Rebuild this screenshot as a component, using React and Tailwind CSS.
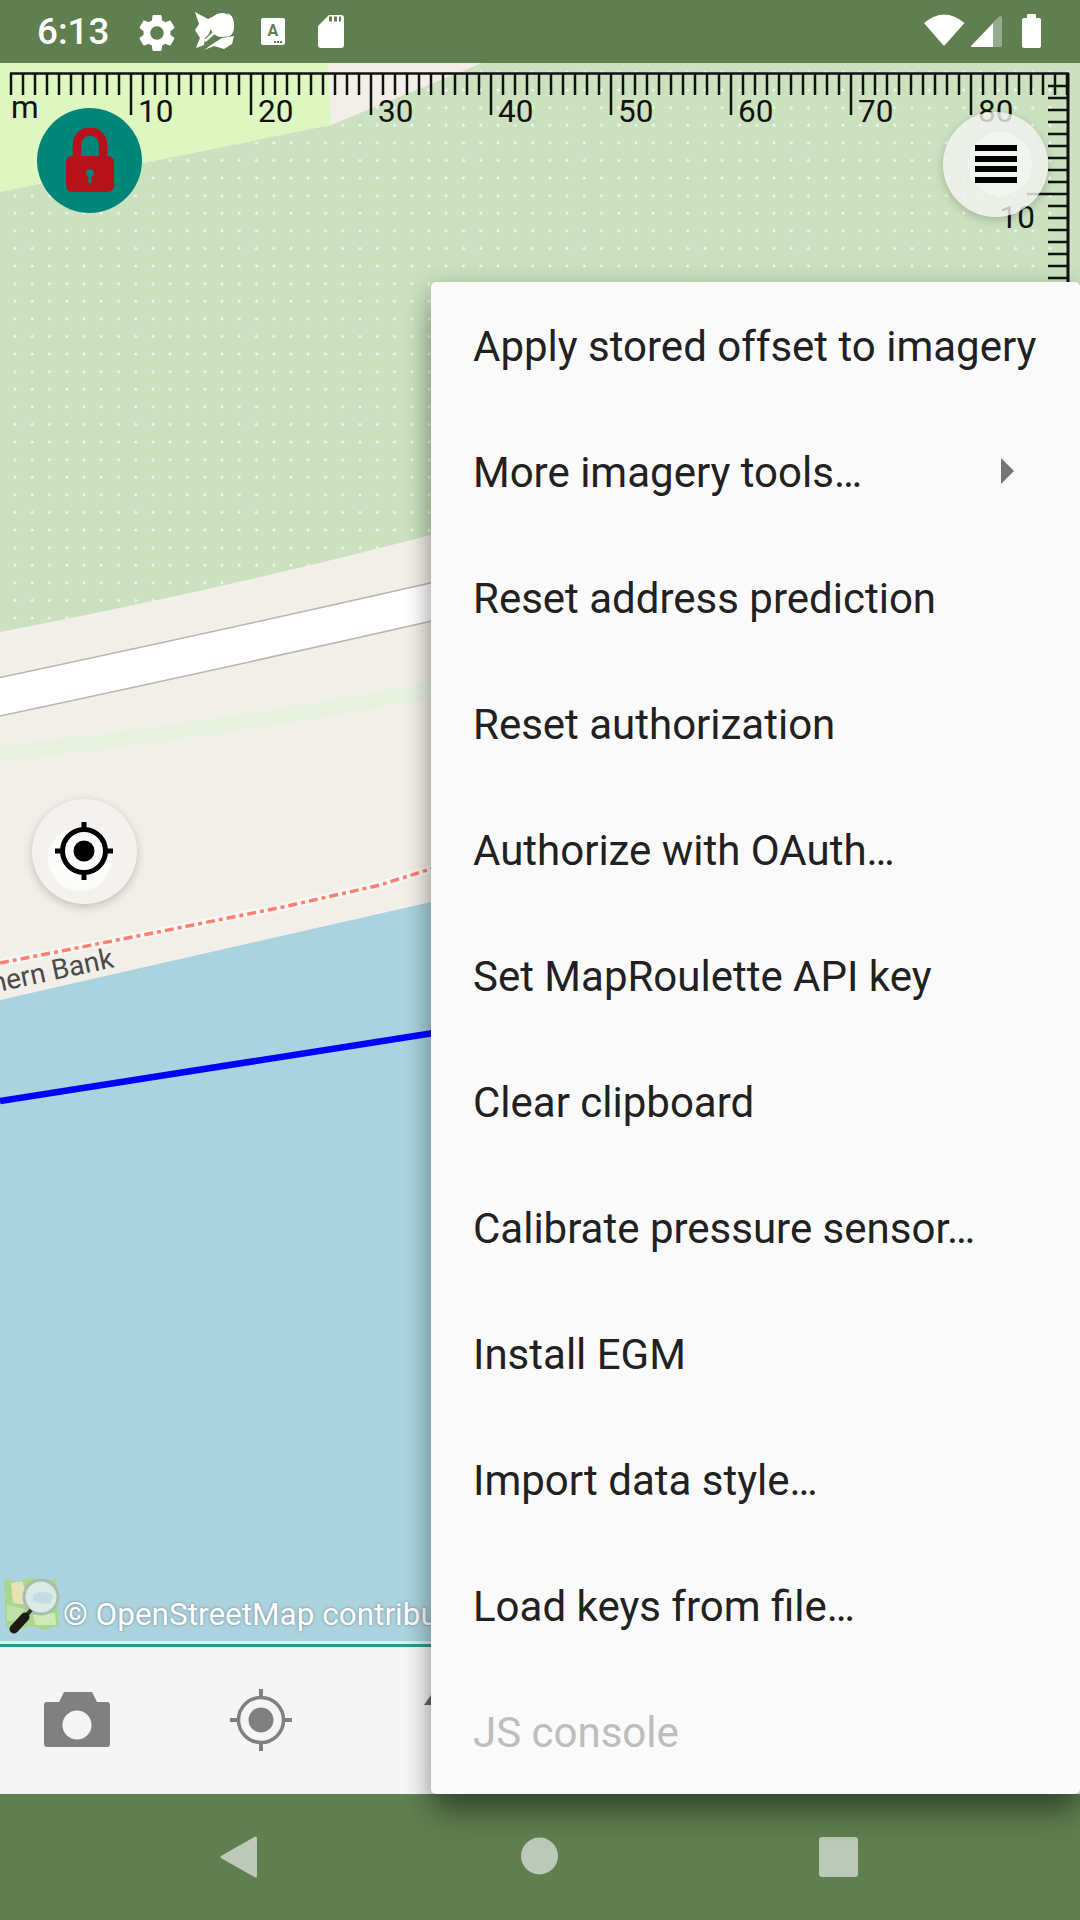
const MENU_ITEMS = [
  { label: "Apply stored offset to imagery" },
  { label: "More imagery tools…", submenu: true },
  { label: "Reset address prediction" },
  { label: "Reset authorization" },
  { label: "Authorize with OAuth…" },
  { label: "Set MapRoulette API key" },
  { label: "Clear clipboard" },
  { label: "Calibrate pressure sensor…" },
  { label: "Install EGM" },
  { label: "Import data style…" },
  { label: "Load keys from file…" },
  { label: "JS console", disabled: true },
];

const RULER_LABELS = [10, 20, 30, 40, 50, 60, 70, 80];
const H_TICKS = Array.from({ length: 89 }, (_, i) => i);
const V_TICKS = Array.from({ length: 18 }, (_, i) => i + 1);

const GEAR =
  "M19.14 12.94c.04-.3.06-.61.06-.94 0-.32-.02-.64-.07-.94l2.03-1.58c.18-.14.23-.41.12-.61l-1.92-3.32c-.12-.22-.37-.29-.59-.22l-2.39.96c-.5-.38-1.03-.7-1.62-.94l-.36-2.54c-.04-.24-.24-.41-.48-.41h-3.84c-.24 0-.43.17-.47.41l-.36 2.54c-.59.24-1.13.57-1.62.94l-2.39-.96c-.22-.08-.47 0-.59.22L2.74 8.87c-.12.21-.08.47.12.61l2.03 1.58c-.05.3-.09.63-.09.94s.02.64.07.94l-2.03 1.58c-.18.14-.23.41-.12.61l1.92 3.32c.12.22.37.29.59.22l2.39-.96c.5.38 1.03.7 1.62.94l.36 2.54c.05.24.24.41.48.41h3.84c.24 0 .44-.17.47-.41l.36-2.54c.59-.24 1.13-.56 1.62-.94l2.39.96c.22.08.47 0 .59-.22l1.92-3.32c.12-.22.07-.47-.12-.61l-2.01-1.58zM12 15.6c-1.98 0-3.6-1.62-3.6-3.6s1.62-3.6 3.6-3.6 3.6 1.62 3.6 3.6-1.62 3.6-3.6 3.6z";

const StatusBar = () => (
  <div className="h-[63px] shrink-0 bg-[#5f7f50] flex items-center relative">
    <span className="ml-[37px] w-[72px] text-[36.75px] leading-[63px] text-white font-medium font-[Roboto,sans-serif]">6:13</span>
    <svg className="absolute left-0 top-0" width="1080" height="63" viewBox="0 0 1080 63">
      <g transform="translate(134.5 10.5) scale(1.875)">
        <path fill="#fff" d={GEAR} />
      </g>
      {/* osmeditor notification icon */}
      <path fill="#fff" d="M195 12 L208 19 L218 14 L213 22 L209 34 L205 38 L204 45 L196 48 L200 38 L195 30 L199 24 Z" />
      <circle cx="222" cy="25" r="12" fill="#fff" />
      <path fill="#fff" d="M228 13 Q235 17 234 29 Q233 36 226 37 L231 29 Z" />
      <path fill="none" stroke="#fff" strokeWidth="2.5" d="M205 41 L214 33" />
      <path fill="#fff" d="M204 50 L214 43 L222 38 L234 36 L232 44 L224 49 L214 46 Z" />
      <rect x="261" y="18" width="24" height="27" rx="2" fill="#fff" />
      <text x="267.5" y="36" fill="#5f7f50" fontFamily="Roboto, sans-serif" fontWeight="700" fontSize="16">A</text>
      <path stroke="#5f7f50" strokeWidth="2" strokeDasharray="2 1" d="M274 42 H283" />
      <path fill="#fff" d="M329 15 H341 Q344 15 344 18 V45 Q344 48 341 48 H321 Q318 48 318 45 V26 Z" />
      <path stroke="#5f7f50" strokeWidth="5" strokeDasharray="3 2" d="M329 19 H341" fill="none" />
      <path fill="#fff" d="M924 23 Q944 6 964.5 23 L945 45 Q944 46 943 45 Z" />
      <path fill="#fff" fillOpacity="0.35" d="M1000 16 Q1002 16 1002 18 V45 Q1002 47 1000 47 H993 V22 Z" />
      <path fill="#fff" d="M993 23 V47 H972 Q970 47 972 45 Z" />
      <path fill="#fff" d="M1027 18 V15 Q1027 14 1028 14 H1035 Q1036 14 1036 15 V18 H1039 Q1041 18 1041 20 V46 Q1041 48 1039 48 H1024 Q1022 48 1022 46 V20 Q1022 18 1024 18 Z" />
    </svg>
  </div>
);

const MapCanvas = () => (
  <svg className="absolute inset-0" width="1080" height="1584" viewBox="0 63 1080 1584">
    <defs>
      <pattern id="dots" x="15" y="2" width="17.25" height="17.6" patternUnits="userSpaceOnUse">
        <circle cx="0" cy="0" r="1.5" fill="#fff" fillOpacity="0.75" />
        <circle cx="17.25" cy="0" r="1.5" fill="#fff" fillOpacity="0.75" />
        <circle cx="0" cy="17.6" r="1.5" fill="#fff" fillOpacity="0.75" />
        <circle cx="17.25" cy="17.6" r="1.5" fill="#fff" fillOpacity="0.75" />
      </pattern>
    </defs>
    <rect x="0" y="63" width="1080" height="1584" fill="#f2efe9" />
    <path fill="#def6c0" d="M0 63 H328 L331 125 L0 192 Z" />
    <path fill="#cbe1bf" d="M0 192 L331 125 L482 63 H1080 V480 L431 535 Q220 590 0 632 Z" />
    <path fill="url(#dots)" d="M0 192 L331 125 L482 63 H1080 V480 L431 535 Q220 590 0 632 Z" />
    {/* road */}
    <path fill="none" stroke="#b8b5b0" strokeWidth="39" d="M-20 701 Q220 650 440 600" />
    <path fill="none" stroke="#fff" strokeWidth="36" d="M-20 701 Q220 650 440 600" />
    <path fill="none" stroke="#e7f2e1" strokeWidth="16" d="M-20 756 Q220 730 440 689" />
    <path fill="#aad3df" d="M0 1000 Q220 950 431 902 L1080 800 V1642 H0 Z" />
    <path fill="none" stroke="#f8f6f2" strokeWidth="8" d="M0 963 L143 935 L283 907 L380 885 L440 866" />
    <path fill="none" stroke="#fa8072" strokeWidth="3.5" strokeDasharray="9 4 4 4" d="M0 963 L143 935 L283 907 L380 885 L440 866" />
    <path fill="none" stroke="#0000ff" strokeWidth="6.5" d="M0 1101 L440 1032" />
    <g transform="translate(-7 993) rotate(-12)">
      <text x="0" y="0" fill="#4a4a4a" stroke="#f2efe9" strokeWidth="3" paintOrder="stroke" fontFamily="Roboto, sans-serif" fontSize="28">hern Bank</text>
    </g>
    <rect x="0" y="1641" width="1080" height="2" fill="#dcecef" />
    <rect x="0" y="1644" width="1080" height="3" fill="#2a9a8a" />

    {/* ruler */}
    <path fill="none" stroke="#111" strokeWidth="2.5" d="M10 73.5 H1069" />
    <path fill="none" stroke="#111" strokeWidth="3" d="M1068 73 V282" />
    {H_TICKS.map((i) => (
      <line key={i} x1={11 + i * 12} x2={11 + i * 12} y1="73" y2={i > 0 && i % 10 === 0 ? 115 : 95} stroke="#111" strokeWidth="2.5" />
    ))}
    {V_TICKS.map((i) => (
      <line key={i} x1={i === 10 ? 1027 : 1048} x2="1068" y1={74 + i * 12} y2={74 + i * 12} stroke="#111" strokeWidth="2.5" />
    ))}
    <text x="11" y="118" fill="#111" fontFamily="Roboto, sans-serif" fontSize="31.5">m</text>
    {RULER_LABELS.map((n) => (
      <text key={n} x={11 + n * 12 + 7} y="121.5" fill="#111" fontFamily="Roboto, sans-serif" fontSize="31.5">{n}</text>
    ))}
    <text x="1035" y="228" textAnchor="end" fill="#111" fontFamily="Roboto, sans-serif" fontSize="31.5">10</text>
  </svg>
);

const LockButton = () => (
  <div className="absolute left-[37px] top-[45px] w-[105px] h-[105px] rounded-full bg-[#00877a] flex items-center justify-center">
    <svg width="50" height="65" viewBox="0 0 50 65">
      <path fill="none" stroke="#b5121b" strokeWidth="8.5" d="M12 32 V17 C12 -1 38 -1 38 17 V32" />
      <rect x="1" y="28" width="48" height="36" rx="6" fill="#b5121b" />
      <circle cx="25" cy="45" r="3.8" fill="#00877a" />
      <rect x="23.5" y="45" width="3" height="10" fill="#00877a" />
    </svg>
  </div>
);

const LayersButton = () => (
  <div className="absolute left-[943px] top-[49px] w-[105px] h-[105px] rounded-full bg-[#f2f2f2]/80 shadow-[0_3px_10px_rgba(0,0,0,0.2)]">
    <div className="absolute left-[25px] top-[20px] w-[64px] h-[64px] rounded-full bg-[#f4f9f3]/70" />
    <div className="absolute left-[32px] top-[33px] w-[42px] flex flex-col gap-[4.6px]">
      <div className="h-[6px] bg-black" />
      <div className="h-[6px] bg-black" />
      <div className="h-[6px] bg-black" />
      <div className="h-[6px] bg-black" />
    </div>
  </div>
);

const FollowButton = () => (
  <div className="absolute left-[32px] top-[736px] w-[105px] h-[105px] rounded-full bg-[#f3f2f0] shadow-[0_3px_10px_rgba(0,0,0,0.2)]">
    <div className="absolute left-[16px] top-[28px] w-[64px] h-[64px] rounded-full bg-[#fbfbfa]" />
    <svg className="absolute left-[20px] top-[20px]" width="64" height="64" viewBox="0 0 64 64">
      <circle cx="32" cy="32" r="21.5" fill="none" stroke="#000" strokeWidth="5" />
      <circle cx="32" cy="32" r="10.5" fill="#000" />
      <path stroke="#000" strokeWidth="5" d="M32 3 V12 M32 52 V61 M3 32 H12 M52 32 H61" />
    </svg>
  </div>
);

const OsmLogo = () => (
  <svg className="absolute left-[3px] top-[1512px] blur-[0.6px]" width="58" height="60" viewBox="0 0 58 60">
    <path fill="#a9d68d" d="M1 3 L14 7 L28 2 L42 6 L53 3 L56 50 L42 55 L27 51 L14 56 L3 53 Z" />
    <path fill="#e6e2b5" d="M8 8 L20 6 L24 30 L10 28 Z" />
    <path fill="#cfe8b8" d="M30 40 L52 38 L53 50 L32 50 Z" />
    <path fill="#bfe0a8" d="M4 30 L22 34 L14 46 L4 46 Z" />
    <circle cx="38" cy="22" r="17" fill="#d9ebe4" stroke="#a8bdb0" strokeWidth="3" />
    <path fill="#b6d0e8" d="M30 20 Q40 14 50 20 L48 28 Q38 30 30 26 Z" fillOpacity="0.6" />
    <path stroke="#333" strokeWidth="4" d="M28 35 L23 41" />
    <path stroke="#1c1a14" strokeWidth="9" strokeLinecap="round" d="M22 42 L11 54" />
  </svg>
);

const Attribution = () => (
  <div className="absolute left-[63px] top-[1532px] w-[368px] overflow-hidden whitespace-nowrap text-[31.5px] leading-[40px] text-white font-[Roboto,sans-serif] [text-shadow:0_0_3px_#6f7f85]">
    © OpenStreetMap contributors
  </div>
);

const BottomToolbar = () => (
  <div className="h-[147px] shrink-0 bg-[#f5f5f5] relative">
    <svg className="absolute left-[44px] top-[45px]" width="66" height="56" viewBox="0 0 66 56">
      <path fill="#808080" d="M20 0 H48 L53 10 H63 Q66 10 66 13 V52 Q66 55 63 55 H3 Q0 55 0 52 V13 Q0 10 3 10 H15 Z" />
      <circle cx="33" cy="33" r="14.5" fill="#f5f5f5" />
    </svg>
    <svg className="absolute left-[227px] top-[39px]" width="68" height="68" viewBox="0 0 68 68">
      <circle cx="34" cy="34" r="22.5" fill="none" stroke="#808080" strokeWidth="3.5" />
      <circle cx="34" cy="34" r="12.5" fill="#808080" />
      <path stroke="#808080" strokeWidth="4" d="M34 3 V12 M34 56 V65 M3 34 H12 M56 34 H65" />
    </svg>
    <svg className="absolute left-[422px] top-[46px]" width="10" height="14" viewBox="0 0 10 14">
      <path fill="#666" d="M2 12 L9 2 V12 Z" />
    </svg>
  </div>
);

const NavBar = () => (
  <div className="h-[126px] shrink-0 bg-[#5f7f50] relative">
    <svg className="absolute left-0 top-0" width="1080" height="126" viewBox="0 0 1080 126">
      <path fill="#bdc9b8" stroke="#bdc9b8" strokeWidth="3" strokeLinejoin="round" d="M255.5 44 V82 L222 63 Z" />
      <circle cx="539.5" cy="62" r="18.5" fill="#bdc9b8" />
      <rect x="819" y="43" width="39" height="40" rx="3" fill="#bdc9b8" />
    </svg>
  </div>
);

const OverflowMenu = () => (
  <div className="absolute left-[431px] top-[282px] w-[649px] rounded-[5px] bg-[#fafafa] shadow-[0_24px_30px_-4px_rgba(0,0,0,0.3),0_6px_24px_2px_rgba(0,0,0,0.22)]">
    {MENU_ITEMS.map((item) => (
      <div key={item.label} className="h-[126px] pl-[42px] pr-[66px] flex items-center justify-between">
        <span className={`pt-[2px] text-[42px] font-[Roboto,sans-serif] whitespace-nowrap ${item.disabled ? "text-[#bdbdbd]" : "text-[#212121]"}`}>
          {item.label}
        </span>
        {item.submenu && (
          <svg width="13" height="26" viewBox="0 0 13 26">
            <path fill="#757575" d="M0 0 L13 13 L0 26 Z" />
          </svg>
        )}
      </div>
    ))}
  </div>
);

export default function App() {
  return (
    <div className="relative w-[1080px] h-[1920px] overflow-hidden flex flex-col">
      <StatusBar />
      <div className="relative flex-1">
        <MapCanvas />
        <LockButton />
        <LayersButton />
        <FollowButton />
        <OsmLogo />
        <Attribution />
      </div>
      <BottomToolbar />
      <NavBar />
      <OverflowMenu />
    </div>
  );
}
